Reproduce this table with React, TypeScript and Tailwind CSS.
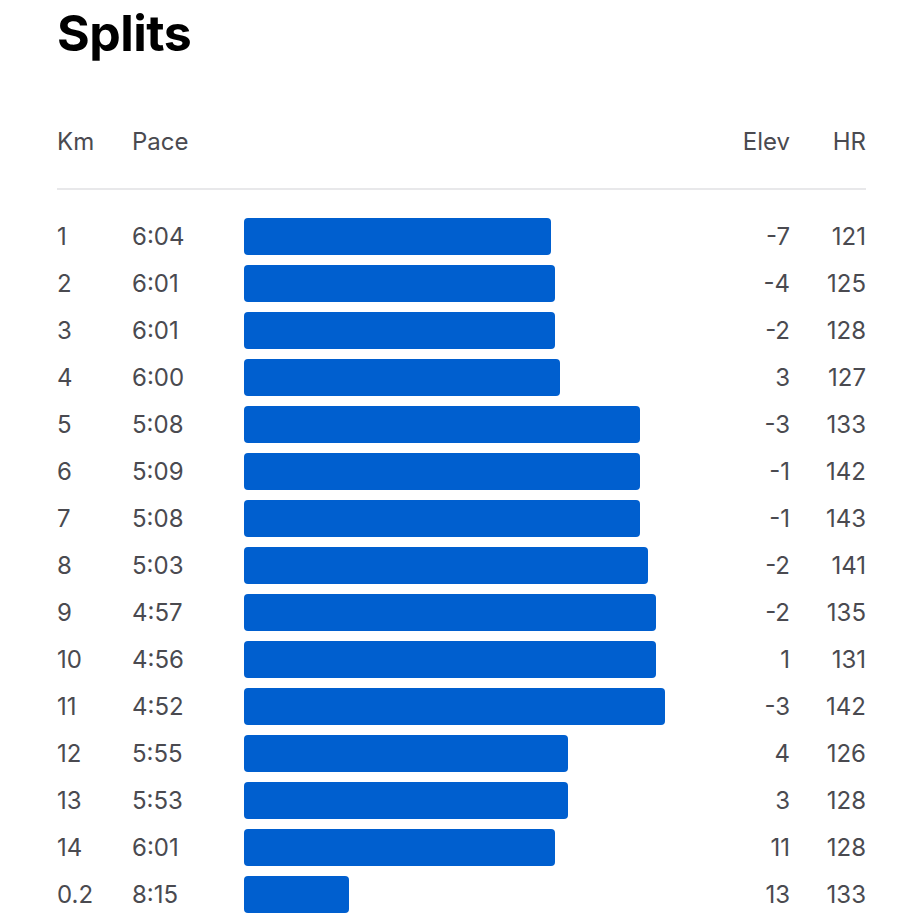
import React from 'react';

type Split = { km: string; pace: string; bar: number; elev: number; hr: number };

const splits: Split[] = [
  { km: '1', pace: '6:04', bar: 307, elev: -7, hr: 121 },
  { km: '2', pace: '6:01', bar: 311, elev: -4, hr: 125 },
  { km: '3', pace: '6:01', bar: 311, elev: -2, hr: 128 },
  { km: '4', pace: '6:00', bar: 316, elev: 3, hr: 127 },
  { km: '5', pace: '5:08', bar: 396, elev: -3, hr: 133 },
  { km: '6', pace: '5:09', bar: 396, elev: -1, hr: 142 },
  { km: '7', pace: '5:08', bar: 396, elev: -1, hr: 143 },
  { km: '8', pace: '5:03', bar: 404, elev: -2, hr: 141 },
  { km: '9', pace: '4:57', bar: 412, elev: -2, hr: 135 },
  { km: '10', pace: '4:56', bar: 412, elev: 1, hr: 131 },
  { km: '11', pace: '4:52', bar: 421, elev: -3, hr: 142 },
  { km: '12', pace: '5:55', bar: 324, elev: 4, hr: 126 },
  { km: '13', pace: '5:53', bar: 324, elev: 3, hr: 128 },
  { km: '14', pace: '6:01', bar: 311, elev: 11, hr: 128 },
  { km: '0.2', pace: '8:15', bar: 105, elev: 13, hr: 133 },
];

export default function App() {
  return (
    <div className="w-[923px] h-[923px] overflow-hidden bg-white px-[57px] font-['Inter',sans-serif] text-[#4a4a50]">
      <h1 className="pt-[5px] text-[50px] leading-[56px] font-bold text-black tracking-[-0.5px]">
        Splits
      </h1>

      {/* header */}
      <div className="mt-[60px] flex items-center h-[42px] text-[24px]">
        <div className="w-[75px]">Km</div>
        <div className="w-[112px]">Pace</div>
        <div className="flex-1" />
        <div className="text-right">Elev</div>
        <div className="w-[76px] text-right">HR</div>
      </div>
      <div className="mt-[25px] h-[2px] bg-[#e8e8ea]" />

      <div className="pt-[28px] flex flex-col gap-[10px]">
        {splits.map((s) => (
          <div key={s.km} className="flex items-center h-[37px] text-[24px]">
            <div className="w-[75px]">{s.km}</div>
            <div className="w-[112px]">{s.pace}</div>
            <div className="flex-1 h-full">
              <div className="h-full rounded-[4px] bg-[#005fcf]" style={{ width: s.bar }} />
            </div>
            <div className="text-right">{s.elev}</div>
            <div className="w-[76px] text-right">{s.hr}</div>
          </div>
        ))}
      </div>
    </div>
  );
}
